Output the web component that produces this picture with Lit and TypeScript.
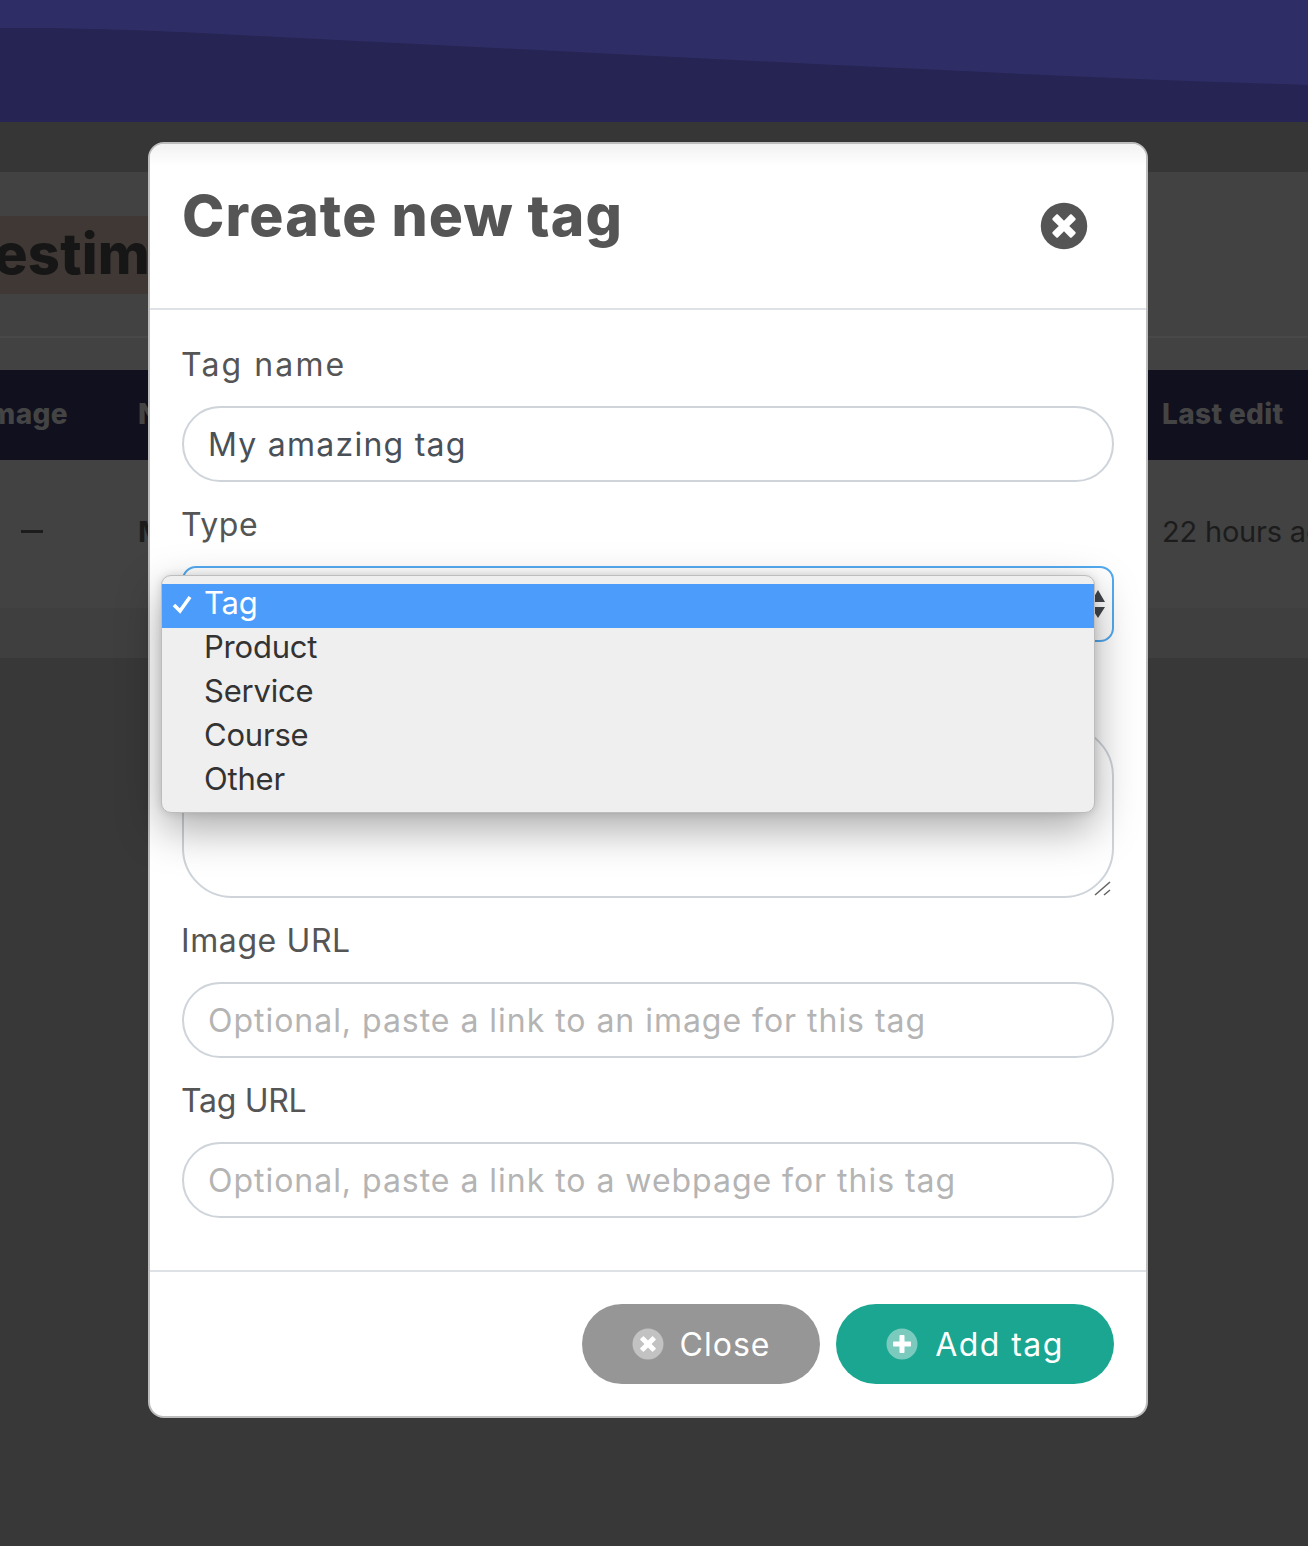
import { LitElement, html, css, svg } from "lit";
import { customElement } from "lit/decorators.js";

const X_GLYPH = "M377.6 321.1c4.7 4.7 4.7 12.3 0 17L338 377.6c-4.7 4.7-12.3 4.7-17 0L256 312l-65.1 65.6c-4.7 4.7-12.3 4.7-17 0L134.4 338c-4.7-4.7-4.7-12.3 0-17l65.6-65-65.6-65.1c-4.7-4.7-4.7-12.3 0-17l39.6-39.6c4.7-4.7 12.3-4.7 17 0l65 65.7 65.1-65.6c4.7-4.7 12.3-4.7 17 0l39.6 39.6c4.7 4.7 4.7 12.3 0 17L312 256l65.6 65.1z";
const PLUS_GLYPH = "M400 284c0 6.6-5.4 12-12 12h-92v92c0 6.6-5.4 12-12 12h-56c-6.6 0-12-5.4-12-12v-92h-92c-6.6 0-12-5.4-12-12v-56c0-6.6 5.4-12 12-12h92v-92c0-6.6 5.4-12 12-12h56c6.6 0 12 5.4 12 12v92h92c6.6 0 12 5.4 12 12v56z";

const icon = (glyph: string, cls: string) => html`<svg class=${cls} viewBox="0 0 512 512" aria-hidden="true">
  ${svg`<circle class="disc" cx="256" cy="256" r="248"></circle><path class="glyph" d=${glyph}></path>`}
</svg>`;

@customElement("app-root")
export class AppRoot extends LitElement {
  static styles = css`
    :host {
      display: block;
      position: relative;
      width: 1308px;
      height: 1546px;
      overflow: hidden;
      background: #383838;
      font-family: Inter, "Liberation Sans", sans-serif;
    }
    * { box-sizing: border-box; }

    /* dimmed page behind the dialog */
    .hero { display: block; width: 1308px; height: 122px; }
    .strip { height: 50px; background: #363636; }
    .panel { background: #424242; height: 486px; display: flex; flex-direction: column; }
    .title-row { margin-top: 44px; height: 78px; width: 150px; background: #3f3835; overflow: hidden; }
    .title-row span {
      display: block;
      margin-left: -6px;
      font-size: 56px;
      font-weight: 800;
      line-height: 76px;
      letter-spacing: 0.2px;
      color: #161616;
      white-space: nowrap;
    }
    .rule { height: 2px; margin-top: 42px; background: #484848; }
    .thead, .tbody {
      display: grid;
      grid-template-columns: 138px 1024px 146px;
      align-items: center;
      overflow: hidden;
      white-space: nowrap;
    }
    .thead { margin-top: 32px; height: 90px; padding-bottom: 3px; background: #10101f; color: #444; font-size: 28px; font-weight: 800; letter-spacing: 0.35px; }
    .thead .first { margin-left: -19px; }
    .tbody { height: 148px; padding-bottom: 6px; color: #1c1c1c; font-size: 29px; letter-spacing: -0.2px; }
    .dash { width: 22px; height: 3px; margin-left: 21px; background: #1c1c1c; }
    .name { font-weight: 700; }
    .pager { height: 50px; background: #3f3f3f; }

    /* dialog */
    .modal {
      position: absolute;
      left: 148px;
      top: 142px;
      width: 1000px;
      height: 1276px;
      display: flex;
      flex-direction: column;
      background: #fff;
      border: 2px solid #bdbdbd;
      border-radius: 16px;
      color: #555;
    }
    .modal-head {
      height: 166px;
      padding: 30px 32px 0;
      display: flex;
      justify-content: space-between;
      border-bottom: 2px solid #dee2e6;
      border-radius: 14px 14px 0 0;
      background: linear-gradient(#f2f2f2, #fff 22px);
    }
    h1 {
      margin: 0;
      font-size: 57px;
      line-height: 84px;
      font-weight: 800;
      letter-spacing: 1.2px;
      color: #555;
    }
    .close-x { width: 48px; height: 48px; margin: 28px 26px 0 0; }
    .close-x .disc { fill: #555; }
    .close-x .glyph { fill: #fff; }

    .modal-body { flex: 1; padding: 31px 32px 0; display: flex; flex-direction: column; gap: 19px; }
    .group { display: flex; flex-direction: column; gap: 17px; position: relative; }
    label { display: block; font-size: 32px; line-height: 48px; color: #555; letter-spacing: 0.6px; text-indent: -1px; }
    label.roomy { letter-spacing: 2.1px; }
    label.tight { letter-spacing: -0.3px; }
    .field {
      height: 76px;
      padding: 0 24px;
      display: flex;
      align-items: center;
      border: 2px solid #ced4da;
      border-radius: 38px;
      background: #fff;
      font-size: 32px;
      color: #495057;
      letter-spacing: 1.25px;
      white-space: nowrap;
    }
    .placeholder { color: #b4b4b4; letter-spacing: 0.97px; }
    .select { border-color: #53aaf0; border-radius: 14px; position: relative; }
    .stepper { position: absolute; right: 6px; top: 20px; width: 16px; height: 32px; }
    .stepper path { fill: #43474c; }
    .textarea { height: 172px; border-radius: 50px; position: relative; }
    .grip { position: absolute; right: 0; bottom: 0; width: 18px; height: 16px; }
    .grip path { stroke: #666; stroke-width: 1.6; fill: none; }

    /* open native-looking select menu */
    .menu {
      position: absolute;
      left: -21px;
      top: 74px;
      width: 934px;
      height: 238px;
      padding: 8px 0;
      background: #efefef;
      border: 1px solid #bdbdbd;
      border-radius: 10px;
      box-shadow: 0 16px 44px rgba(0, 0, 0, 0.34), 0 0 8px rgba(0, 0, 0, 0.12);
      z-index: 2;
    }
    .option {
      height: 44px;
      padding: 0 0 8px 42px;
      display: flex;
      align-items: center;
      position: relative;
      font-size: 31px;
      letter-spacing: -0.2px;
      color: #333;
    }
    .option.on { background: #4c9cfb; color: #fff; }
    .check { position: absolute; left: 10px; top: 10px; width: 20px; height: 20px; }
    .check path { stroke: #fff; stroke-width: 3.6; fill: none; }

    .modal-foot {
      height: 146px;
      padding: 32px;
      display: flex;
      justify-content: flex-end;
      gap: 16px;
      border-top: 2px solid #dee2e6;
    }
    .btn {
      height: 80px;
      border-radius: 40px;
      display: flex;
      align-items: center;
      justify-content: center;
      gap: 16px;
      font-size: 32px;
      color: #fff;
    }
    .btn svg { width: 32px; height: 32px; }
    .btn .disc { fill: #fff; opacity: 0.42; }
    .btn .glyph { fill: #fff; }
    .btn.grey { width: 238px; background: #969696; letter-spacing: 1px; }
    .btn.teal { width: 278px; background: #1aa690; letter-spacing: 1.45px; gap: 17px; }
  `;

  render() {
    return html`
      <svg class="hero" viewBox="0 0 1308 122" preserveAspectRatio="none" aria-hidden="true">
        <rect width="1308" height="122" fill="#252452"></rect>
        <path d="M0 28 C60 28 120 29 200 33 C350 41 500 48 654 56 C860 66 1080 78 1308 85 L1308 0 L0 0 Z" fill="#2f2d66"></path>
      </svg>
      <div class="strip"></div>
      <div class="panel">
        <div class="title-row"><span>estimates</span></div>
        <div class="rule"></div>
        <div class="thead"><span class="first">Image</span><span>Name</span><span>Last edit</span></div>
        <div class="tbody"><div class="dash"></div><span class="name">My product</span><span>22 hours ago</span></div>
        <div class="pager"></div>
      </div>

      <div class="modal" role="dialog">
        <div class="modal-head">
          <h1>Create new tag</h1>
          ${icon(X_GLYPH, "close-x")}
        </div>
        <div class="modal-body">
          <div class="group">
            <label class="roomy">Tag name</label>
            <div class="field">My amazing tag</div>
          </div>
          <div class="group">
            <label>Type</label>
            <div class="field select">
              Tag
              <svg class="stepper" viewBox="0 0 16 32" aria-hidden="true"><path d="M8 2 L15 14 L1 14 Z M8 30 L1 19 L15 19 Z"></path></svg>
            </div>
            <div class="menu">
              <div class="option on">
                <svg class="check" viewBox="0 0 20 20" aria-hidden="true"><path d="M2 11 L8 17 L18 3"></path></svg>
                Tag
              </div>
              <div class="option">Product</div>
              <div class="option">Service</div>
              <div class="option">Course</div>
              <div class="option">Other</div>
            </div>
          </div>
          <div class="group">
            <label>Description</label>
            <div class="field textarea">
              <svg class="grip" viewBox="0 0 18 16" aria-hidden="true"><path d="M1 15 L16 2 M10 15 L16 10"></path></svg>
            </div>
          </div>
          <div class="group">
            <label>Image URL</label>
            <div class="field placeholder">Optional, paste a link to an image for this tag</div>
          </div>
          <div class="group">
            <label class="tight">Tag URL</label>
            <div class="field placeholder">Optional, paste a link to a webpage for this tag</div>
          </div>
        </div>
        <div class="modal-foot">
          <div class="btn grey">${icon(X_GLYPH, "")}<span>Close</span></div>
          <div class="btn teal">${icon(PLUS_GLYPH, "")}<span>Add tag</span></div>
        </div>
      </div>
    `;
  }
}
